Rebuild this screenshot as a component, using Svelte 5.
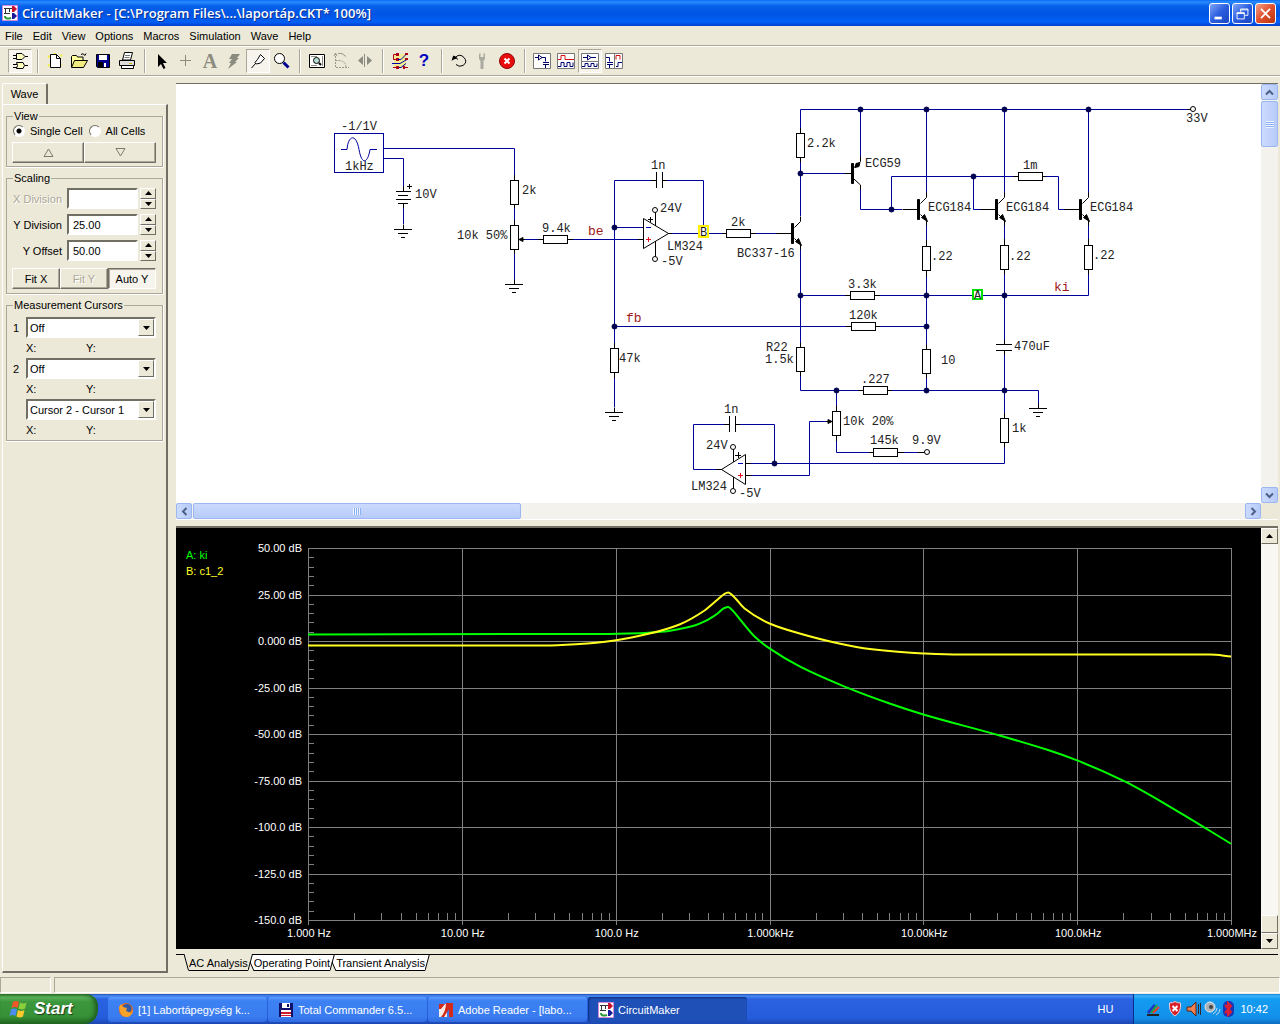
<script lang="ts">
	type Point = [number, number];

	const menus = ['File', 'Edit', 'View', 'Options', 'Macros', 'Simulation', 'Wave', 'Help'];

	const toolGroups = [
		['Parts'],
		['New', 'Open', 'Save', 'Print'],
		['Arrow', 'Wire', 'Text', 'Delete', 'Probe', 'Zoom'],
		['Fit', 'Rotate', 'Mirror'],
		['Digital', 'Help topics'],
		['Reset', 'Step', 'Stop'],
		['Schematic', 'Waves', 'Split horizontal', 'Split vertical']
	];
	let pressedTools = $state(['Parts', 'Probe', 'Split horizontal']);

	// only one of the edit tools and one of the layouts is down at a time
	function press(tool: string, group: string[]) {
		if (group.length < 4 || group[0] === 'New') return;
		pressedTools = [...pressedTools.filter((name) => !group.includes(name)), tool];
	}

	let cell = $state('single');
	let scaling = $state([
		{ id: 'xdiv', label: 'X Division', value: '', disabled: true },
		{ id: 'ydiv', label: 'Y Division', value: '25.00', disabled: false },
		{ id: 'yoff', label: 'Y Offset', value: '50.00', disabled: false }
	]);

	function step(i: number, delta: number) {
		const value = parseFloat(scaling[i].value) || 0;
		scaling[i].value = (value + delta).toFixed(2);
	}

	// Schematic
	const wires = [
		'384,148.5 514.5,148.5 514.5,175',
		'384,158.5 403.5,158.5 403.5,186',
		'403.5,207 403.5,224',
		'514.5,208 514.5,220',
		'514.5,254 514.5,283',
		'524,239.5 538,239.5',
		'573,239.5 638,239.5',
		'643,227.5 614.5,227.5',
		'651,180.5 614.5,180.5 614.5,343',
		'667,180.5 703.5,180.5 703.5,226',
		'614.5,378 614.5,407',
		'672,233.5 722,233.5',
		'756,233.5 777,233.5',
		'614.5,326.5 846,326.5',
		'880,326.5 926.5,326.5',
		'800.5,128 800.5,109.5 1187,109.5',
		'800.5,162 800.5,216',
		'800.5,248 800.5,343',
		'800.5,376 800.5,390.5 858,390.5',
		'800.5,173.5 845,173.5',
		'860.5,109.5 860.5,157',
		'860.5,190 860.5,209.5 902,209.5',
		'891.5,209.5 891.5,176.5 1013,176.5',
		'973.5,176.5 973.5,209.5 985,209.5',
		'1046,176.5 1058.5,176.5 1058.5,209.5 1065,209.5',
		'926.5,109.5 926.5,193',
		'1004.5,109.5 1004.5,193',
		'1088.5,109.5 1088.5,193',
		'926.5,225 926.5,240',
		'1004.5,225 1004.5,239',
		'1088.5,225 1088.5,239',
		'926.5,277 926.5,345',
		'1004.5,274 1004.5,340',
		'1088.5,274 1088.5,295.5 880,295.5',
		'800.5,295.5 845,295.5',
		'926.5,378 926.5,390.5',
		'892,390.5 1038.5,390.5 1038.5,404',
		'1004.5,355 1004.5,413',
		'1004.5,447 1004.5,463.5 751,463.5',
		'836.5,390.5 836.5,406',
		'836.5,441 836.5,452.5 869,452.5',
		'904,452.5 918,452.5',
		'826,421.5 809.5,421.5 809.5,475.5 751,475.5',
		'774.5,463.5 774.5,424.5 740,424.5',
		'724,424.5 693.5,424.5 693.5,469.5 716,469.5'
	];

	const dots: Point[] = [
		[614.5, 227.5], [614.5, 326.5], [800.5, 173.5], [800.5, 295.5], [860.5, 109.5],
		[926.5, 109.5], [1004.5, 109.5], [1088.5, 109.5], [891.5, 209.5], [973.5, 176.5],
		[926.5, 295.5], [1004.5, 295.5], [926.5, 326.5], [926.5, 390.5], [1004.5, 390.5],
		[836.5, 390.5], [774.5, 463.5]
	];

	// centre of each resistor body
	const verticalResistors: Point[] = [
		[514.5, 192.5], [514.5, 237.5], [614.5, 360.5], [800.5, 145.5], [800.5, 359.5],
		[926.5, 258.5], [1004.5, 257.5], [1088.5, 257.5], [926.5, 361.5], [836.5, 423.5],
		[1004.5, 430.5]
	];
	const horizontalResistors: Point[] = [
		[555.5, 239.5], [738.5, 233.5], [862.5, 295.5], [863.5, 326.5], [1030.5, 176.5],
		[875.5, 390.5], [885.5, 452.5]
	];

	const grounds: Point[] = [[403, 229.5], [514, 284.5], [614, 412.5], [1038, 408.5]];
	const terminals: Point[] = [
		[655, 210], [655, 259], [733, 447], [733, 491], [1193, 109], [927, 452]
	];
	const npn: Point[] = [[800.5, 233.5], [926.5, 209.5], [1004.5, 209.5], [1088.5, 209.5]];

	const labels: [number, number, string][] = [
		[341, 130, '-1/1V'], [345, 170, '1kHz'], [415, 198, '10V'], [522, 194, '2k'],
		[457, 239, '10k 50%'], [542, 232, '9.4k'], [651, 169, '1n'], [660, 212, '24V'],
		[667, 250, 'LM324'], [661, 265, '-5V'], [731, 226, '2k'], [737, 257, 'BC337-16'],
		[619, 362, '47k'], [766, 351, 'R22'], [765, 363, '1.5k'], [807, 147, '2.2k'],
		[865, 167, 'ECG59'], [928, 211, 'ECG184'], [1006, 211, 'ECG184'], [1090, 211, 'ECG184'],
		[1023, 169, '1m'], [1186, 122, '33V'], [931, 260, '.22'], [1009, 260, '.22'],
		[1093, 259, '.22'], [848, 288, '3.3k'], [849, 319, '120k'], [941, 364, '10'],
		[1014, 350, '470uF'], [861, 383, '.227'], [843, 425, '10k 20%'], [870, 444, '145k'],
		[912, 444, '9.9V'], [1012, 432, '1k'], [724, 413, '1n'], [706, 449, '24V'],
		[691, 490, 'LM324'], [739, 497, '-5V']
	];
	const nets: [number, number, string][] = [[588, 235, 'be'], [626, 322, 'fb'], [1054, 291, 'ki']];

	// AC analysis traces: decade above 1 Hz, level in dB
	const traces: { name: string; color: string; points: Point[] }[] = [
		{
			name: 'A: ki',
			color: '#00ff00',
			points: [
				[0, 3.5], [1.9, 3.8], [2.155, 4.2], [2.318, 5.1], [2.415, 6.4], [2.513, 8.3],
				[2.578, 10.5], [2.63, 13], [2.663, 14.8], [2.702, 17.5], [2.731, 18.3], [2.76, 16.4],
				[2.819, 10.5], [2.903, 2.4], [3, -4], [3.196, -13.7], [3.488, -24.5],
				[3.781, -33.6], [4, -39.5], [4.496, -50.8], [4.821, -58.9], [5, -64.2],
				[5.309, -75.5], [5.634, -90.6], [6, -109]
			]
		},
		{
			name: 'B: c1_2',
			color: '#ffff20',
			points: [
				[0, -2.4], [1.538, -2.4], [1.765, -1.6], [1.993, 0.3], [2.22, 4], [2.415, 8.9],
				[2.578, 16.4], [2.663, 22.3], [2.702, 25], [2.731, 26.1], [2.773, 23.4],
				[2.838, 17.5], [3, 9.4], [3.196, 4], [3.423, -0.8], [3.651, -4.3], [4, -6.7],
				[4.236, -7.3], [5.861, -7.3], [6, -8.3]
			]
		}
	];

	const levels = ['50.00 dB', '25.00 dB', '0.000 dB', '-25.00 dB', '-50.00 dB', '-75.00 dB', '-100.0 dB', '-125.0 dB', '-150.0 dB'];
	const frequencies = ['1.000 Hz', '10.00 Hz', '100.0 Hz', '1.000kHz', '10.00kHz', '100.0kHz', '1.000MHz'];

	let plotWidth = $state(1085);
	let plotHeight = $state(421);
	let right = $derived(plotWidth - 30);
	let bottom = $derived(plotHeight - 29);
	const left = 132;
	const top = 20;

	const px = (decade: number) => left + (decade / 6) * (right - left);
	const py = (db: number) => top + ((50 - db) / 200) * (bottom - top);
	const crisp = (v: number) => Math.round(v) + 0.5;

	// monotone cubic through the points, so the flat parts stay flat
	function curve(points: Point[]) {
		const p = points.map(([a, b]) => [px(a), py(b)]);
		const slope = p.slice(1).map((q, i) => (q[1] - p[i][1]) / (q[0] - p[i][0]));
		const m = p.map((_, i) => {
			const a = slope[i - 1] ?? slope[i];
			const b = slope[i] ?? slope[i - 1];
			return a * b <= 0 ? 0 : (2 * a * b) / (a + b);
		});
		let d = `M${p[0][0]} ${p[0][1]}`;
		for (let i = 1; i < p.length; i++) {
			const h = (p[i][0] - p[i - 1][0]) / 3;
			d += `C${p[i - 1][0] + h} ${p[i - 1][1] + m[i - 1] * h} ${p[i][0] - h} ${p[i][1] - m[i] * h} ${p[i][0]} ${p[i][1]}`;
		}
		return d;
	}

	let gridPath = $derived.by(() => {
		let d = '';
		for (let i = 0; i <= 8; i++) d += `M${left} ${crisp(py(50 - i * 25))}H${right}`;
		for (let i = 0; i <= 6; i++) d += `M${crisp(px(i))} ${top}V${bottom + 5}`;
		for (let i = 0; i < 40; i++) d += `M${left} ${crisp(py(50 - i * 5))}h6`;
		for (let i = 0; i < 6; i++) {
			for (let k = 2; k < 10; k++) d += `M${crisp(px(i + Math.log10(k)))} ${bottom}v-7`;
		}
		return d;
	});
</script>

{#snippet logo()}
	<svg class="logo" width="16" height="16" viewBox="0 0 16 16" aria-hidden="true">
		<path fill="#fff" stroke="#d58ad8" d="M.5.5h15v15H.5z" />
		<path fill="none" stroke="#333" d="M2 3.500h9M3.500 3v6M7.500 3v4M2 8.500h6" />
		<path fill="#c8102e" d="M10 1h2l3 3-3 3h-2z" />
		<path fill="#1a1a9c" d="M10 8h2l3 3-3 3h-2z" />
		<path fill="none" stroke="#2f9a3a" stroke-width="2" d="M3 11c0 3 3 3 6 2" />
	</svg>
{/snippet}

{#snippet icon(name: string)}
	<svg width="20" height="20" viewBox="0 0 20 20" fill="none" stroke="#000" aria-hidden="true">
		{#if name === 'Parts'}
			<path fill="#ffffc0" d="M6.500 2.500H12l3 3-3 3H6.500zM6.500 11.500H13q3 3 0 6H6.500q2-3 0-6z" />
			<path d="M3 4.500h3M3 7.500h3M15 5.500h3M3 13.500h4M3 16.500h4M15 14.500h3" />
		{:else if name === 'New'}
			<path stroke="#f3ee30" stroke-width="2" stroke-dasharray="2 2" d="M3 5l14 9M3 15L17 4M10 2v16" />
			<path fill="#fff" d="M5.500 3.500h6l4 4v9h-10z" /><path d="M11.500 3.500v4h4" />
		{:else if name === 'Open'}
			<path fill="#ffff9c" d="M2.500 16V5.500l1-1h4l1 1.500h5.500v3" /><path fill="#f0ec80" d="M2.500 16.500l3-7h13l-4 7z" />
			<path d="M12 3.500q2-2 4 1l1-2" />
		{:else if name === 'Save'}
			<path fill="#000090" d="M3.500 3.500h13v13h-12l-1-1z" /><path fill="#fff" stroke="none" d="M6 4h8v5H6zM11 12h2v4h-2z" />
			<path fill="#000" stroke="none" d="M5 11h5v5H5z" />
		{:else if name === 'Print'}
			<path fill="#fff" d="M5.500 9l2-7.500h8L13.500 9z" /><path stroke="#777" d="M8 4.500h5M7.500 6.500h5" />
			<path fill="#ddd" d="M2.500 9.500h15v5h-15z" /><path fill="#fff" d="M4.500 14.500h12v3h-12z" /><path stroke="#c9b900" d="M12 12.500h3" />
		{:else if name === 'Arrow'}
			<path fill="#000" stroke="none" d="M6 3v13l3-3 2.500 5 2-1-2.500-5h4z" />
		{:else if name === 'Wire'}
			<path stroke="#8b8b80" d="M9.500 4v11M4 9.500h11" />
		{:else if name === 'Delete'}
			<path fill="#8b8b80" stroke="none" d="M8 3h8l-3 4h2l-4 4h2l-9 7 3-6H5l3-4H5z" />
		{:else if name === 'Probe'}
			<path fill="#fff" d="M9.500 8.500l3-5 4 4-4 4.500-4 1-1.500-1.500zM8 12L3.500 17" />
		{:else if name === 'Zoom'}
			<circle cx="7.500" cy="7.500" r="5" fill="#fff" /><path stroke="#000090" stroke-width="3" d="M11.500 11.500l5 5" />
		{:else if name === 'Fit'}
			<path fill="#fff" d="M2.500 3.500h15v13h-15z" /><path stroke="#8b8b80" d="M4 5.500h6M15.500 5v10M4 14.500h6" />
			<circle cx="9.500" cy="9.500" r="3" fill="#b6dcd4" /><path stroke-width="2" d="M12 12l2 2" />
		{:else if name === 'Rotate'}
			<path stroke="#99998d" d="M4.500 2v14.500H18M4.500 9.500H9q6 1 6 7" stroke-dasharray="2 1" /><path stroke="#99998d" d="M7 2.500h4l4 3M3 5l1.500-3L6 5" />
		{:else if name === 'Mirror'}
			<path stroke="#8b8b80" d="M9.500 3v13" /><path fill="#8b8b80" stroke="none" d="M8 5v9L3 9.500zM12 5v9l5-4.500z" />
		{:else if name === 'Digital'}
			<path fill="#f6ee50" stroke="none" d="M4 3h12v14H4z" opacity=".5" />
			<path stroke="#b00018" d="M8 3.500H3.500v5H8M3 16.500h5M13 16.500h5" /><path fill="#b00018" stroke="none" d="M6 2h3v3H6zM6 7h3v3H6zM6 15h3v3H6z" />
			<path stroke="#0000a8" d="M8 8.500h3l6-6M2 12.500h8l7-4M9 16.500h2l5-4" /><path fill="#b00018" stroke="none" d="M15 2h3v2h-3zM15 7h3v2h-3zM13 15h2v3h-2z" />
		{:else if name === 'Reset'}
			<path d="M6 6.500q5-4.500 9 0t-1 8q-4 2-7-1M3 9.500l2.500-4L9 8.500" /><path fill="#000" d="M3.500 8.500l1-3.500 3 2z" />
		{:else if name === 'Step'}
			<path fill="#aaaaa0" stroke="none" d="M6 3l1.500-1v4h3V2L12 3v5l-1.500 2v8h-3v-8L6 8z" />
		{:else if name === 'Stop'}
			<circle cx="10" cy="10" r="7.500" fill="#e80c0c" stroke="#8e0606" /><path stroke="#fff" stroke-width="2" d="M7.500 7.500l5 5M12.500 7.500l-5 5" />
		{:else}
			<path fill="#fff" stroke="#777" d="M1.500 2.500h17v15h-17z" />
			{#if name === 'Schematic'}
				<path stroke="#000060" d="M3 6.500h3M6.500 4v5l3.500-2.500zM10 6.500h3.500v4M11 11.500h6M11 13.500h6M13.500 14v3" />
			{:else if name === 'Waves'}
				<path stroke="#d01010" d="M2 8.500h3v-4h4v4h9" /><path stroke="#000070" d="M2 15.500h3v-4h3v4h3v-4h3v4h3v-4" />
			{:else if name === 'Split horizontal'}
				<path stroke="#777" d="M2 10.500h16" /><path stroke="#000070" d="M3 6.500h4M7.500 4v5L11 6.500zM11 6.500h5M2 15.500h3v-3h3v3h3v-3h3v3h3v-3" />
			{:else}
				<path stroke="#777" d="M10.500 2v16" /><path stroke="#000070" d="M2 6.500h3.500v4M3 11.500h6M3 13.500h6M5.500 14v3M12 15.500h2v-4h4" /><path stroke="#d01010" d="M12 8.500v-4h4v4" />
			{/if}
		{/if}
	</svg>
{/snippet}

{#snippet chevron(turn: string)}
	<svg class="chevron {turn}" width="9" height="9" viewBox="0 0 9 9" aria-hidden="true">
		<path fill="none" stroke="#4d6185" stroke-width="2" d="M1 6.500l3.500-3.500L8 6.500" />
	</svg>
{/snippet}

<div class="window">
	<header class="titlebar">
		{@render logo()}
		<h1>CircuitMaker - [C:\Program Files\...\laportáp.CKT* 100%]</h1>
		<div class="window-buttons">
			<button aria-label="Minimize"><svg viewBox="0 0 21 21"><path stroke="#fff" stroke-width="3" d="M5 15.500h8" /></svg></button>
			<button aria-label="Restore"><svg viewBox="0 0 21 21"><path fill="none" stroke="#fff" d="M8.500 9V5.500h8v7H13M8 6.500h9M4.500 9.500h8v7h-8zM4 10.500h9" /></svg></button>
			<button class="close" aria-label="Close"><svg viewBox="0 0 21 21"><path stroke="#fff" stroke-width="2" d="M5.500 5.500l10 10M15.500 5.500l-10 10" /></svg></button>
		</div>
	</header>

	<nav class="menubar">
		{#each menus as menu}
			<button>{menu}</button>
		{/each}
	</nav>

	<div class="toolbar">
		{#each toolGroups as group}
			<div class="tool-group">
				{#each group as tool}
					<button
						class:pressed={pressedTools.includes(tool)}
						aria-label={tool}
						onclick={() => press(tool, group)}
					>
						{#if tool === 'Text'}
							<span class="glyph">A</span>
						{:else if tool === 'Help topics'}
							<span class="glyph help">?</span>
						{:else}
							{@render icon(tool)}
						{/if}
					</button>
				{/each}
			</div>
		{/each}
	</div>

	<main>
		<aside>
			<div class="tab-row"><button class="side-tab">Wave</button></div>
			<div class="side-panel">
				<fieldset>
					<legend>View</legend>
					<div class="radios">
						<label><input type="radio" name="cell" value="single" bind:group={cell} />Single Cell</label>
						<label><input type="radio" name="cell" value="all" bind:group={cell} />All Cells</label>
					</div>
					<div class="button-row">
						<button aria-label="Previous cell"><svg width="11" height="9" viewBox="0 0 11 9"><path fill="none" stroke="#7d7b6d" d="M5.500 1L10 8.500H1z" /></svg></button>
						<button aria-label="Next cell"><svg width="11" height="9" viewBox="0 0 11 9"><path fill="none" stroke="#7d7b6d" d="M5.500 8L10 .5H1z" /></svg></button>
					</div>
				</fieldset>

				<fieldset class="scaling">
					<legend>Scaling</legend>
					{#each scaling as row, i}
						<div class="field">
							<label for={row.id} class:dim={row.disabled}>{row.label}</label>
							<input id={row.id} type="text" bind:value={row.value} disabled={row.disabled} />
							<div class="spin">
								<button aria-label="Increase {row.label}" onclick={() => step(i, 1)}><svg width="7" height="4" viewBox="0 0 7 4"><path d="M0 4l3.500-4L7 4z" /></svg></button>
								<button aria-label="Decrease {row.label}" onclick={() => step(i, -1)}><svg width="7" height="4" viewBox="0 0 7 4"><path d="M0 0h7L3.500 4z" /></svg></button>
							</div>
						</div>
					{/each}
					<div class="button-row">
						<button>Fit X</button>
						<button disabled>Fit Y</button>
						<button class="pressed">Auto Y</button>
					</div>
				</fieldset>

				<fieldset class="cursors">
					<legend>Measurement Cursors</legend>
					{#each [['1', 'Off'], ['2', 'Off'], ['', 'Cursor 2 - Cursor 1']] as [num, value], i}
						<div class="cursor">
							<label for="cursor{i}">{num}</label>
							<div class="combo">
								<select id="cursor{i}" aria-label={num ? `Cursor ${num}` : 'Difference'}><option>{value}</option></select>
								<span class="combo-arrow"><svg width="7" height="4" viewBox="0 0 7 4"><path d="M0 0h7L3.500 4z" /></svg></span>
							</div>
						</div>
						<div class="readout"><span>X:</span><span>Y:</span></div>
					{/each}
				</fieldset>
			</div>
		</aside>

		<div class="workspace">
			<section class="schematic">
				<div class="canvas">
					<svg width="1085" height="419" viewBox="176 84 1085 419">
						<g class="wire">
							{#each wires as points}<polyline {points} />{/each}
							<rect x="334.5" y="133.5" width="49" height="39" />
							<path d="M341 149.500h6c1-14 9-17 12 0s9 13 11 0h7" />
						</g>
						<g class="part">
							<path d="M514.500 175v33M514.500 220v34M538 239.500h35M638 239.500h6M614.500 343v35M800.500 128v34M800.500 343v33M722 233.500h34M846 326.500h34M845 295.500h35M926.500 240v37M1004.500 239v35M1088.500 239v35M926.500 345v33M858 390.500h34M836.500 406v35M869 452.500h35M1004.500 413v34M1013 176.500h33M1187 109.500h4M918 452.500h7" />
							{#each verticalResistors as [x, y]}<rect x={x - 4} y={y - 12} width="8" height="24" />{/each}
							{#each horizontalResistors as [x, y]}<rect x={x - 12} y={y - 4} width="24" height="8" />{/each}
							{#each grounds as [x, y]}<path d="M{x - 9} {y}h18M{x - 5} {y + 4}h10M{x - 2} {y + 8}h4M{x + 0.5} {y}v-5" />{/each}
							<path d="M403.500 186v5M396 191.500h15M398 195.500h10M396 199.500h15M398 203.500h10M403.500 204v4M407 186.500h5M409.500 184v5" />
							<path d="M651 180.500h5M662 180.500h5M656.500 172v16M662.500 172v16" />
							<path d="M724 424.500h5M735 424.500h5M729.500 416v16M735.500 416v16" />
							<path d="M1004.500 340v5M1004.500 350v5M996 344.500h16M996 350.500h16" />
							<path d="M643.500 218.500v30l25-15zM655.500 212v14M655.500 241v16M648 219.500h5M650.500 217v5M668 233.500h4" />
							<path d="M745.500 454.500v30l-24-15zM733.500 449v13M733.500 477v12M735 455.500h6M738.500 452v6M716 469.500h6M746 463.500h5M746 475.500h5" />
							{#each npn as [x, y]}
								<path d="M{x - 8} {y}h-16M{x - 6} {y - 6}l6 -6v-5M{x - 6} {y + 5}l6 6v5" />
								<path class="solid" d="M{x - 9} {y - 10}h2v20h-2zM{x - 5} {y + 8}l3 -3 3 7z" />
							{/each}
							<path d="M845 173.500h7M854 167.500l6.500-6v-5M854 179l6.500 6v5" />
							<path class="solid" d="M851.500 163.500h2v20h-2zM855 167.500l1-4 4-1-1 4z" />
							<path class="solid" d="M519 239.500l4-2v4zM832 421.500l-4-2v4z" />
							<path d="M523 239.500h2M826 421.500h3" />
							{#each terminals as [x, y]}<circle cx={x} cy={y} r="2.500" />{/each}
						</g>
						{#each dots as [cx, cy]}<circle class="dot" {cx} {cy} r="2.500" />{/each}
						<path class="minus" d="M646 227.500h5M738 463.500h5" />
						<path class="plus" d="M646 239.500h5M648.500 237v5M738 475.500h5M740.500 473v5" />
						<rect class="probe-b" x="699" y="226" width="9" height="11" />
						<rect class="probe-a" x="973" y="290" width="9" height="9" />
						<text class="part-text" x="700" y="236">B</text>
						<text class="part-text" x="974" y="299">A</text>
						{#each labels as [x, y, text]}<text class="part-text" {x} {y}>{text}</text>{/each}
						{#each nets as [x, y, text]}<text class="net-text" {x} {y}>{text}</text>{/each}
					</svg>
				</div>
				<div class="scroll vertical">
					<button aria-label="Scroll up">{@render chevron('up')}</button>
					<div class="thumb"><i></i></div>
					<div class="track"></div>
					<button aria-label="Scroll down">{@render chevron('down')}</button>
				</div>
				<div class="scroll horizontal">
					<button aria-label="Scroll left">{@render chevron('left')}</button>
					<div class="thumb"><i></i></div>
					<div class="track"></div>
					<button aria-label="Scroll right">{@render chevron('right')}</button>
				</div>
			</section>

			<section class="analysis">
				<div class="plot" bind:clientWidth={plotWidth} bind:clientHeight={plotHeight}>
					<svg width={plotWidth} height={plotHeight}>
						<path class="grid" d={gridPath} />
						{#each traces as trace, i}
							<path class="trace" stroke={trace.color} d={curve(trace.points)} />
							<text x="10" y={31 + i * 16} fill={trace.color}>{trace.name}</text>
						{/each}
						{#each levels as level, i}
							<text class="level" x={left - 6} y={py(50 - i * 25) + 4}>{level}</text>
						{/each}
						{#each frequencies as frequency, i}
							<text class="frequency" x={px(i) + 1} y={bottom + 17}>{frequency}</text>
						{/each}
					</svg>
				</div>
				<div class="classic-scroll">
					<button aria-label="Scroll plot up"><svg width="7" height="4" viewBox="0 0 7 4"><path d="M0 4l3.500-4L7 4z" /></svg></button>
					<div class="classic-track"></div>
					<div class="classic-thumb"></div>
					<button aria-label="Scroll plot down"><svg width="7" height="4" viewBox="0 0 7 4"><path d="M0 0h7L3.500 4z" /></svg></button>
				</div>
			</section>

			<div class="sheet-tabs">
				<span class="edge"></span>
				<svg width="5" height="17" viewBox="0 0 5 17"><path d="M0 0l4.500 16.500" /></svg>
				<button class="current">AC Analysis</button>
				<svg width="6" height="17" viewBox="0 0 6 17"><path fill="#fff" stroke="none" d="M4.500 0H6v17L2 8z" /><path d="M0 16.500L4.500 0M2 8l4 9M4 .500h2" /></svg>
				<button>Operating Point</button>
				<svg width="6" height="17" viewBox="0 0 6 17"><path fill="#fff" stroke="none" d="M0 0h6v17L2 8 0 17z" /><path d="M0 16.500L4.500 0M2 8l4 9M0 .500h6" /></svg>
				<button>Transient Analysis</button>
				<svg width="6" height="17" viewBox="0 0 6 17"><path fill="#fff" stroke="none" d="M0 0h5L0 17z" /><path d="M0 16.500L4.500 0M0 .500h6" /></svg>
				<span class="edge rest"></span>
			</div>
		</div>
	</main>

	<footer class="status"><div></div><div></div></footer>

	<div class="taskbar">
		<button class="start">
			<svg width="20" height="20" viewBox="0 0 20 20" aria-hidden="true">
				<path fill="#f0562a" d="M4 3q3-2 6 0L8.500 9q-3-2-6 0z" /><path fill="#8ccf3d" d="M11 3.500q3 2 6.500 0L16 9.500q-3 2-6.500 0z" />
				<path fill="#4d8df0" d="M2 10.500q3-2 6 0L6.500 17q-3-2-6 0z" /><path fill="#fbc92e" d="M9 11q3 2 6.500 0L14 17.500q-3 2-6.500 0z" />
			</svg>
			<span>Start</span>
		</button>
		<div class="tasks">
			<button>
				<svg width="16" height="16" viewBox="0 0 16 16" aria-hidden="true"><circle cx="8" cy="8" r="7" fill="#e8681c" /><circle cx="9" cy="6.500" r="4.500" fill="#315ba8" /><path fill="#f7a32a" d="M1 5l2-3 2 3 4 1-1 3 5 2 2-4q0 6-5 8-8 1-9-10z" /></svg>
				[1] Labortápegység k...
			</button>
			<button>
				<svg width="16" height="16" viewBox="0 0 16 16" aria-hidden="true"><path fill="#10106a" d="M1 1h14v14H1z" /><path fill="#fff" d="M4 1h8v5H4zM3 8h10v7H3z" /><path fill="#d01c2c" d="M3 10h10v2H3zM3 13h10v1H3z" /><path fill="#10106a" d="M9 2h2v3H9z" /></svg>
				Total Commander 6.5...
			</button>
			<button>
				<svg width="16" height="16" viewBox="0 0 16 16" aria-hidden="true"><path fill="#f8ece8" d="M1 2h8v13H1z" /><path fill="#d42a1c" d="M1 2h6l-4 5H1zM8 1h7v14h-4V7l-5 8H3q5-6 5-14z" /></svg>
				Adobe Reader - [labo...
			</button>
			<button class="current">{@render logo()} CircuitMaker</button>
		</div>
		<span class="language">HU</span>
		<div class="tray">
			<svg width="89" height="18" viewBox="0 0 89 18" aria-hidden="true">
				<path stroke="#222" stroke-width="2" d="M2 15h12" /><path stroke="#1c38c8" stroke-width="3" d="M3 13l7-8" /><path stroke="#21a83a" stroke-width="2" d="M6 13l6-8" /><path stroke="#f03a28" stroke-width="2" d="M8 13l6-6" />
				<path fill="#d8202c" stroke="#f4c8cc" d="M24.500 3q3 0 5.500-1.500Q32 3 35.500 3q1 9-5.500 13-6.500-4-5.500-13z" /><path stroke="#fff" stroke-width="2" d="M27.500 6l5 5M32.500 6l-5 5" />
				<path fill="#f08050" stroke="#5a2418" d="M42 7h4l5-5v14l-5-5h-4z" /><path fill="none" stroke="#382828" d="M53.500 4v10M55.500 3v12" />
				<circle cx="65" cy="7" r="5" fill="#aab0b4" stroke="#e8eaec" /><circle cx="66" cy="7" r="2" fill="#444" /><path fill="none" stroke="#c6d8e8" d="M68 14q4-2 4-6M71 15q4-2 4-6" />
				<rect x="78" y="1" width="11" height="16" rx="5" fill="#1a35b8" /><path fill="none" stroke="#e02030" stroke-width="2" d="M80 5l6 7-3 3V3l3 3-6 7" />
			</svg>
			<span>10:42</span>
		</div>
	</div>
</div>

<style>
	:global(body) {
		margin: 0;
	}

	.window {
		--face: #ece9d8;
		--shadow: #aca899;
		--dark: #716f64;
		display: flex;
		flex-direction: column;
		min-height: 100vh;
		background: var(--face);
		color: #000;
		font-family: 'Liberation Sans', Arial, sans-serif;
		font-size: 11px;
		line-height: 12px;
	}

	button,
	input,
	select {
		box-sizing: border-box;
		margin: 0;
		padding: 0;
		border: 0;
		border-radius: 0;
		background: none;
		color: inherit;
		font: inherit;
	}

	.titlebar {
		display: flex;
		align-items: center;
		gap: 4px;
		height: 26px;
		padding: 0 4px 0 2px;
		background: linear-gradient(#0a6af4 0, #2a8cff 2px, #0560ea 6px, #0054e3 14px, #0260f6 22px, #003dd0 26px);
	}

	h1 {
		flex: 1;
		margin: 0;
		color: #fff;
		font: 600 13px/16px 'Open Sans', sans-serif;
		text-shadow: 1px 1px #0a2f8f;
		white-space: nowrap;
	}

	.window-buttons {
		display: flex;
		gap: 2px;
	}

	.window-buttons button {
		width: 21px;
		height: 21px;
		border: 1px solid #fff;
		border-radius: 3px;
		background: linear-gradient(135deg, #7fa5f6, #2a5ddf 50%, #1c47c0);
	}

	.window-buttons svg {
		display: block;
		width: 19px;
		height: 19px;
	}

	.window-buttons .close {
		background: linear-gradient(135deg, #f0a088, #e0502c 50%, #b8320c);
	}

	.menubar {
		display: flex;
		height: 19px;
		border-bottom: 1px solid var(--shadow);
	}

	.menubar button {
		padding: 0 5px;
	}

	.toolbar {
		display: flex;
		align-items: center;
		height: 28px;
		padding-left: 8px;
		border-top: 1px solid #fff;
		border-bottom: 1px solid var(--shadow);
	}

	.tool-group {
		display: flex;
	}

	.tool-group + .tool-group {
		margin-left: 5px;
		padding-left: 5px;
		border-left: 1px solid var(--shadow);
		box-shadow: inset 1px 0 #fff;
	}

	.tool-group button {
		display: grid;
		place-items: center;
		width: 24px;
		height: 24px;
		border: 1px solid transparent;
	}

	.tool-group .pressed {
		border-color: var(--shadow) #fff #fff var(--shadow);
		background: #f6f4ec;
	}

	.glyph {
		color: #8b8b80;
		font: bold 20px/22px 'Liberation Serif', serif;
	}

	.glyph.help {
		color: #0000c0;
		font: bold 17px/22px 'Liberation Sans', sans-serif;
	}

	main {
		display: flex;
		flex: 1;
		gap: 8px;
		padding: 6px 2px 2px;
		border-top: 1px solid #fff;
	}

	aside {
		display: flex;
		flex-direction: column;
		width: 166px;
	}

	.tab-row {
		height: 21px;
	}

	.side-tab {
		width: 46px;
		height: 21px;
		border: 1px solid #fff;
		border-right: 2px solid var(--dark);
		border-bottom: 0;
		border-radius: 2px 2px 0 0;
	}

	.side-panel {
		display: flex;
		flex: 1;
		flex-direction: column;
		gap: 5px;
		padding: 5px 3px;
		border: 1px solid #fff;
		border-right: 2px solid var(--dark);
		border-bottom: 2px solid var(--dark);
	}

	fieldset {
		display: flex;
		flex-direction: column;
		min-width: 0;
		margin: 0;
		padding: 2px 6px 3px 5px;
		border: 1px solid var(--shadow);
		box-shadow: 1px 0 #fff, 0 1px #fff;
	}

	legend {
		margin-left: 1px;
		padding: 0 1px;
	}

	.radios {
		display: flex;
		align-items: flex-start;
		gap: 6px;
		height: 18px;
		padding-left: 1px;
	}

	.radios label {
		display: flex;
		align-items: center;
		gap: 5px;
		height: 14px;
		white-space: nowrap;
	}

	.radios input {
		appearance: none;
		width: 12px;
		height: 12px;
		border: 1px solid;
		border-color: var(--dark) #fff #fff var(--dark);
		border-radius: 50%;
		background: #fff;
	}

	.radios input:checked {
		background: radial-gradient(#000 2px, #fff 3px);
	}

	.button-row {
		display: flex;
		height: 21px;
	}

	.button-row button {
		flex: 1 0 0;
		border: 1px solid;
		border-color: #fff var(--dark) var(--dark) #fff;
		box-shadow: inset -1px -1px var(--shadow);
	}

	.button-row button:disabled {
		color: var(--shadow);
		text-shadow: 1px 1px #fff;
	}

	.button-row .pressed {
		border-color: var(--dark) #fff #fff var(--dark);
		background: #f6f4ec;
		box-shadow: inset 1px 1px var(--shadow);
	}

	.scaling {
		gap: 5px;
		padding-top: 4px;
		padding-bottom: 4px;
	}

	.scaling .button-row {
		padding-top: 2px;
	}

	.field {
		display: flex;
		align-items: center;
		height: 21px;
	}

	.field label {
		flex: 1;
		padding-right: 5px;
		text-align: right;
		white-space: nowrap;
	}

	.field .dim {
		color: var(--shadow);
		text-shadow: 1px 1px #fff;
	}

	.field input {
		width: 71px;
		height: 21px;
		padding-left: 4px;
		border: 2px solid;
		border-color: var(--dark) #fff #fff var(--dark);
		background: #fff;
	}

	.spin {
		display: flex;
		flex-direction: column;
		width: 16px;
		height: 21px;
		margin-left: 2px;
	}

	.spin button,
	.combo-arrow,
	.classic-scroll button,
	.classic-thumb {
		display: grid;
		flex: 1;
		place-items: center;
		border: 1px solid;
		border-color: #fff var(--dark) var(--dark) #fff;
		background: var(--face);
	}

	.cursors {
		padding-top: 6px;
		padding-bottom: 0;
	}

	.cursor {
		display: flex;
		align-items: center;
	}

	.cursor label {
		box-sizing: border-box;
		width: 14px;
		padding-left: 1px;
	}

	.combo {
		display: flex;
		flex: 1;
		box-sizing: border-box;
		height: 21px;
		border: 2px solid;
		border-color: var(--dark) #fff #fff var(--dark);
		background: #fff;
	}

	.combo select {
		flex: 1;
		min-width: 0;
		padding-left: 2px;
		appearance: none;
	}

	.combo-arrow {
		flex: 0 0 14px;
		pointer-events: none;
	}

	.readout {
		display: grid;
		grid-template-columns: 60px 1fr;
		height: 16px;
		padding: 4px 0 0 14px;
	}

	.workspace {
		display: flex;
		flex: 1;
		flex-direction: column;
		min-width: 0;
	}

	.schematic {
		display: grid;
		flex: 1 1 0;
		grid-template-columns: 1fr 17px;
		grid-template-rows: 1fr 16px;
		border-top: 1px solid var(--dark);
		border-bottom: 1px solid #fff;
	}

	.canvas {
		min-width: 0;
		overflow: hidden;
		background: #fff;
	}

	.canvas svg,
	.plot svg {
		display: block;
	}

	.wire {
		fill: none;
		stroke: #00009c;
	}

	.part {
		fill: #fff;
		stroke: #000;
	}

	.solid {
		fill: #000;
	}

	.dot {
		fill: #000050;
		stroke: #000050;
	}

	.minus {
		stroke: #0000c0;
	}

	.plus {
		stroke: #e01020;
	}

	.probe-b,
	.probe-a {
		fill: #fff;
		stroke: #fff000;
		stroke-width: 2px;
	}

	.probe-a {
		stroke: #00e000;
	}

	.part-text {
		fill: #222;
		font: 12px 'Liberation Mono', monospace;
	}

	.net-text {
		fill: #a01818;
		font: 13px 'Liberation Mono', monospace;
	}

	.scroll {
		display: flex;
		gap: 1px;
		background: #f3f2ec;
	}

	.scroll.vertical {
		flex-direction: column;
	}

	.scroll button,
	.thumb {
		display: grid;
		flex: 0 0 16px;
		place-items: center;
		border: 1px solid #9bb6f0;
		border-radius: 2px;
		background: linear-gradient(90deg, #cbdafd, #b7cbf9);
	}

	.vertical .thumb {
		flex-basis: 44px;
	}

	.horizontal .thumb {
		flex-basis: 326px;
		background: linear-gradient(#cbdafd, #b7cbf9);
	}

	.track {
		flex: 1;
	}

	.thumb i {
		width: 8px;
		height: 7px;
		background: repeating-linear-gradient(#eef4fe 0 1px, #8cb0f8 1px 2px);
	}

	.horizontal .thumb i {
		background: repeating-linear-gradient(90deg, #eef4fe 0 1px, #8cb0f8 1px 2px);
	}

	.chevron.down {
		transform: rotate(180deg);
	}

	.chevron.left {
		transform: rotate(-90deg);
	}

	.chevron.right {
		transform: rotate(90deg);
	}

	.analysis {
		display: flex;
		flex: 1 1 0;
		margin-top: 6px;
		border-top: 2px solid var(--dark);
	}

	.plot {
		flex: 1;
		min-width: 0;
		overflow: hidden;
		background: #000;
	}

	.plot text {
		font: 11px 'Liberation Sans', Arial, sans-serif;
	}

	.plot .level {
		fill: #fff;
		text-anchor: end;
	}

	.plot .frequency {
		fill: #fff;
		text-anchor: middle;
	}

	.grid {
		stroke: #808080;
	}

	.trace {
		fill: none;
		stroke-width: 2px;
	}

	.classic-scroll {
		display: flex;
		flex-direction: column;
		width: 17px;
	}

	.classic-scroll button,
	.classic-thumb {
		flex: 0 0 16px;
	}

	.classic-track {
		flex: 1;
		background: #f8f7f2;
	}

	.sheet-tabs {
		display: flex;
		height: 17px;
		margin-top: 5px;
		margin-bottom: 2px;
	}

	.sheet-tabs svg {
		fill: none;
		stroke: #000;
	}

	.edge {
		width: 8px;
		border-top: 1px solid #000;
	}

	.edge.rest {
		flex: 1;
	}

	.sheet-tabs button {
		border-top: 1px solid #000;
		border-bottom: 1px solid #000;
		background: #fff;
	}

	.sheet-tabs .current {
		border-top-color: var(--face);
		background: var(--face);
	}

	.status {
		display: flex;
		gap: 3px;
		height: 19px;
	}

	.status div {
		width: 49px;
		margin: 2px 0 1px;
		border: 1px solid;
		border-color: var(--shadow) #fff #fff var(--shadow);
	}

	.status div:last-child {
		flex: 1;
	}

	.taskbar {
		display: flex;
		height: 30px;
		background: linear-gradient(#1f4fb8 0, #4a8cf4 2px, #2a62e0 5px, #245cdb 24px, #1b46b0 30px);
		color: #fff;
	}

	.start {
		display: flex;
		align-items: center;
		gap: 5px;
		width: 98px;
		padding-left: 9px;
		border-radius: 0 12px 14px 0;
		background: linear-gradient(#2f7d2f 0, #5cb45c 3px, #3c963c 8px, #379237 22px, #226822 30px);
		box-shadow: inset -3px 0 4px #1e5c1e;
		font: italic bold 17px/20px 'Liberation Sans', sans-serif;
		text-shadow: 1px 1px 1px #1a3c1a;
	}

	.tasks {
		display: flex;
		flex: 1;
		gap: 1px;
		margin-left: 10px;
		padding: 3px 0 2px;
	}

	.tasks button {
		display: flex;
		align-items: center;
		gap: 4px;
		width: 159px;
		padding-left: 10px;
		border-radius: 3px;
		background: linear-gradient(#5c9cff 0, #3c81f3 4px, #3a7cf0 20px, #2f6be0 25px);
		white-space: nowrap;
	}

	.tasks .current {
		background: #1e50b8;
		box-shadow: inset 1px 1px 2px #0c2e7c;
	}

	.language {
		align-self: center;
		padding-right: 20px;
	}

	.tray {
		display: flex;
		align-items: center;
		gap: 6px;
		padding: 0 12px 0 11px;
		border-left: 1px solid #0c2c88;
		background: linear-gradient(#1583e0 0, #3cb4f8 2px, #139cf0 5px, #1290ea 24px, #0e6cc0 30px);
	}
</style>
